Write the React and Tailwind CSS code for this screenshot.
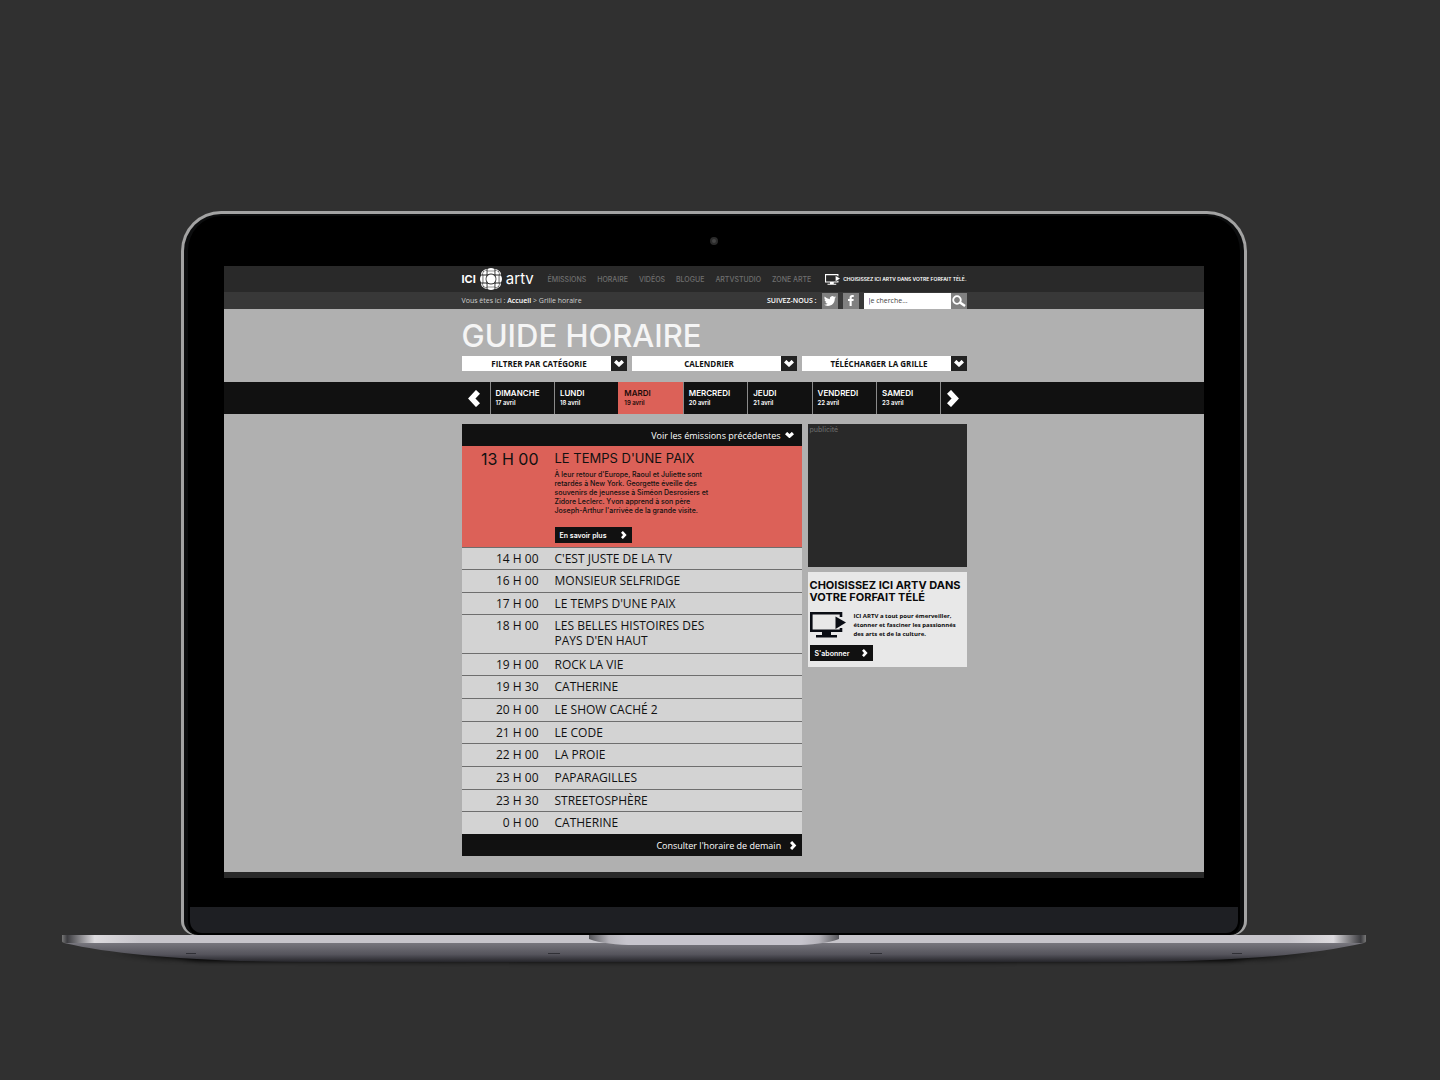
const NAV = ['ÉMISSIONS', 'HORAIRE', 'VIDÉOS', 'BLOGUE', 'ARTVSTUDIO', 'ZONE ARTE'];

const DAYS = [
  ['DIMANCHE', '17 avril'],
  ['LUNDI', '18 avril'],
  ['MARDI', '19 avril'],
  ['MERCREDI', '20 avril'],
  ['JEUDI', '21 avril'],
  ['VENDREDI', '22 avril'],
  ['SAMEDI', '23 avril'],
];

const SHOWS = [
  ['14 H 00', "C'EST JUSTE DE LA TV"],
  ['16 H 00', 'MONSIEUR SELFRIDGE'],
  ['17 H 00', "LE TEMPS D'UNE PAIX"],
  ['18 H 00', "LES BELLES HISTOIRES DES PAYS D'EN HAUT"],
  ['19 H 00', 'ROCK LA VIE'],
  ['19 H 30', 'CATHERINE'],
  ['20 H 00', 'LE SHOW CACHÉ 2'],
  ['21 H 00', 'LE CODE'],
  ['22 H 00', 'LA PROIE'],
  ['23 H 00', 'PAPARAGILLES'],
  ['23 H 30', 'STREETOSPHÈRE'],
  ['0 H 00', 'CATHERINE'],
];

function Chevron({ className }) {
  return (
    <svg viewBox="0 0 12 17" className={className} fill="none" stroke="currentColor" strokeWidth="5.500" aria-hidden="true">
      <path d="M2 1.8 8.2 8.500 2 15.2" />
    </svg>
  );
}

function ChevronDown({ className }) {
  return (
    <svg viewBox="0 0 17 12" className={className} fill="none" stroke="currentColor" strokeWidth="6" aria-hidden="true">
      <path d="M2 2 8.500 8 15 2" />
    </svg>
  );
}

function Screen({ className }) {
  return (
    <svg viewBox="0 0 36 26" className={className} fill="none" aria-hidden="true">
      <path d="M31 5V1.3H1.3V18.8H31V16" stroke="currentColor" strokeWidth="2.6" />
      <path d="M25.500 4.500 36 10.500 25.500 17z" fill="currentColor" />
      <path d="M12 19h9v4h6v2.500H6V23h6z" fill="currentColor" />
    </svg>
  );
}

function Gem({ className }) {
  const quarters = [0, 90, 180, 270];
  return (
    <svg viewBox="-50 -50 100 100" className={className} fill="currentColor" aria-hidden="true">
      <circle r="21" />
      {quarters.map((a) => (
        <g key={a} transform={`rotate(${a})`}>
          <path d="M-16 -38V-45Q0 -55 16 -45V-38z" />
          <path d="M-16 -35H16V-20Q0 -29 -16 -20z" />
          <path d="M20 -36H27Q36 -34 36 -27V-20H22Q22 -22 20 -22z" />
          <path d="M20 -46Q32 -44 36 -38L35 -35Q30 -39 20 -39z" />
          <path d="M46 -20Q44 -32 38 -36L35 -35Q39 -30 39 -20z" />
        </g>
      ))}
    </svg>
  );
}

function Header() {
  return (
    <header className="text-white">
      <div className="bg-[#292929]">
        <div className="mx-auto flex h-[26px] w-full max-w-[505px] items-center justify-between">
          <a href="#accueil" aria-label="ICI ARTV" className="flex items-center gap-1">
            <span className="text-[11px] font-bold">ICI</span>
            <Gem className="size-[22px]" />
            <span className="text-[15px] leading-5">artv</span>
          </a>
          <nav className="flex gap-[11px] text-[7px] font-medium text-[#6f6f6f]">
            {NAV.map((n) => (
              <a key={n} href="#nav">{n}</a>
            ))}
          </nav>
          <a href="#forfait" className="flex items-center gap-[3px] text-[5px] font-semibold">
            <Screen className="h-[11px] w-[15px]" />
            CHOISISSEZ ICI ARTV DANS VOTRE FORFAIT TÉLÉ.
          </a>
        </div>
      </div>
      <div className="bg-[#383838] font-['Open_Sans',sans-serif]">
        <div className="mx-auto flex h-[17px] w-full max-w-[505px] items-center justify-between">
          <p className="text-[7px] leading-[9px] text-[#d0d0d0]">
            Vous êtes ici : <a href="#accueil" className="font-semibold text-white">Accueil</a> &gt; Grille horaire
          </p>
          <div className="flex items-end gap-[5px]">
            <span className="text-[7px] font-semibold leading-4">SUIVEZ-NOUS :</span>
            <a href="#twitter" aria-label="Twitter" className="flex size-4 items-center justify-center bg-[#808080]">
              <svg viewBox="0 0 24 24" className="size-3" fill="currentColor" aria-hidden="true">
                <path d="M23.95 4.57a10 10 0 0 1-2.82.77 4.96 4.96 0 0 0 2.16-2.72c-.95.55-2 .95-3.13 1.18a4.92 4.92 0 0 0-8.38 4.48C7.69 8.1 4.07 6.13 1.64 3.16a4.92 4.92 0 0 0 1.52 6.57 4.9 4.9 0 0 1-2.23-.61v.06a4.92 4.92 0 0 0 3.95 4.83 5 5 0 0 1-2.21.08 4.94 4.94 0 0 0 4.6 3.42A9.87 9.87 0 0 1 0 19.54a13.99 13.99 0 0 0 7.55 2.21c9.05 0 14-7.5 14-13.98 0-.21 0-.42-.02-.63a9.94 9.94 0 0 0 2.42-2.57z" />
              </svg>
            </a>
            <a href="#facebook" aria-label="Facebook" className="flex size-4 items-center justify-center bg-[#808080]">
              <svg viewBox="0 0 12 22" className="h-[11px] w-[6px]" fill="currentColor" aria-hidden="true">
                <path d="M3.2 22V12H0V8h3.2V5.300C3.200 2 5.200 0 8.300 0c1.500 0 2.800.1 3.200.2v3.700H9.400C7.700 3.900 7.400 4.700 7.400 5.800V8h4l-.5 4H7.400v10z" />
              </svg>
            </a>
            <form className="flex" onSubmit={(e) => e.preventDefault()}>
              <input type="search" aria-label="Je cherche" placeholder="Je cherche..." className="h-4 w-[87px] bg-white px-[5px] text-[7px] text-[#444] placeholder:text-[#444]" />
              <button type="submit" aria-label="Rechercher" className="flex size-4 items-center justify-center bg-[#808080]">
                <svg viewBox="0 0 14 12" className="h-3 w-[14px]" fill="none" stroke="currentColor" aria-hidden="true">
                  <circle cx="5" cy="5" r="3.800" strokeWidth="1.800" />
                  <path d="M8 7.500 13 11" strokeWidth="2.400" />
                </svg>
              </button>
            </form>
          </div>
        </div>
      </div>
    </header>
  );
}

function Filters() {
  const box = 'relative flex h-[15px] flex-1 bg-white';
  const field = "w-full appearance-none pr-[10px] text-center font-['Open_Sans',sans-serif] text-[8px] leading-[15px] font-bold text-[#111] [text-align-last:center]";
  const icon = 'pointer-events-none absolute right-0 top-0 flex h-[15px] w-4 items-center justify-center bg-[#222] text-white';
  return (
    <div className="mt-[3px] flex gap-[5px]">
      <div className={box}>
        <select aria-label="Filtrer par catégorie" className={field}>
          <option>FILTRER PAR CATÉGORIE</option>
        </select>
        <span className={icon}><ChevronDown className="w-[10px]" /></span>
      </div>
      <div className={box}>
        <select aria-label="Calendrier" className={field}>
          <option>CALENDRIER</option>
        </select>
        <span className={icon}><ChevronDown className="w-[10px]" /></span>
      </div>
      <div className={box}>
        <button type="button" className={field}>TÉLÉCHARGER LA GRILLE</button>
        <span className={icon}><ChevronDown className="w-[10px]" /></span>
      </div>
    </div>
  );
}

function Week() {
  return (
    <nav aria-label="Jours" className="mt-[11px] bg-[#111] text-white">
      <div className="mx-auto flex h-8 w-full max-w-[505px]">
        <button type="button" aria-label="Semaine précédente" className="flex w-7 items-center pl-[6px]">
          <Chevron className="h-[17px] w-3 rotate-180" />
        </button>
        {DAYS.map(([day, date]) => (
          <a
            key={day}
            href="#jour"
            className={
              day === 'MARDI'
                ? 'flex-1 border-l border-[#dc6158] bg-[#dc6158] pt-[6px] pl-[5px] text-[#1c0b0a]'
                : 'flex-1 border-l border-[#8a8a8a] pt-[6px] pl-[5px]'
            }
          >
            <span className="block text-[8px] leading-[10px] font-semibold">{day}</span>
            <span className="block text-[6px] leading-[10px] font-semibold">{date}</span>
          </a>
        ))}
        <button type="button" aria-label="Semaine suivante" className="flex w-[26px] items-center border-l border-[#8a8a8a] pl-[6px]">
          <Chevron className="h-[17px] w-3" />
        </button>
      </div>
    </nav>
  );
}

function Schedule() {
  return (
    <section className="min-w-0 flex-[340]">
      <button type="button" className="flex h-[22px] w-full items-center justify-end gap-1 bg-[#111] pr-2 font-['Open_Sans',sans-serif] text-[9px] font-medium text-white">
        Voir les émissions précédentes
        <ChevronDown className="w-[9px]" />
      </button>
      <table aria-label="Horaire du mardi 19 avril" className="h-[388px] w-full table-fixed border-collapse text-[#111]">
        <colgroup>
          <col className="w-[93px]" />
          <col />
        </colgroup>
        <tbody>
          <tr className="h-[101px] bg-[#dc6158] align-top">
            <th scope="row" className="pt-1 pr-4 text-right text-[16px] leading-[19px] font-normal">13 H 00</th>
            <td className="pt-[3px]">
              <h2 className="text-[13px] leading-[18px]">LE TEMPS D'UNE PAIX</h2>
              <p className="mt-[3px] max-w-[162px] text-[7px] leading-[9px] font-medium">
                À leur retour d'Europe, Raoul et Juliette sont retardés à New York. Georgette éveille des souvenirs de jeunesse à Siméon Desrosiers et Zidore Leclerc. Yvon apprend à son père Joseph-Arthur l'arrivée de la grande visite.
              </p>
              <button type="button" className="mt-3 flex h-4 w-[77px] items-center justify-between bg-[#111] px-[5px] text-[7px] font-semibold text-white">
                En savoir plus
                <Chevron className="h-2" />
              </button>
            </td>
          </tr>
          {SHOWS.map(([time, title]) => (
            <tr key={time} className="border-t border-[#6e6e6e] bg-[#d3d3d3] align-top font-['Open_Sans',sans-serif]">
              <th scope="row" className="pt-[3px] pr-4 pb-[3px] text-right text-[12px] leading-[15px] font-medium">{time}</th>
              <td className="pt-[3px] pr-[80px] pb-[3px] text-[12px] leading-[15px] font-medium">{title}</td>
            </tr>
          ))}
        </tbody>
      </table>
      <a href="#demain" className="flex h-[22px] items-center justify-end gap-[9px] bg-[#111] pr-[5px] font-['Open_Sans',sans-serif] text-[9px] font-medium text-white">
        Consulter l'horaire de demain
        <Chevron className="h-[9px]" />
      </a>
    </section>
  );
}

function Sidebar() {
  return (
    <aside className="flex min-w-0 flex-[159] flex-col gap-[5px]">
      <div className="h-[143px] bg-[#292929] px-[2px] pt-[1px] text-[7px] leading-[10px] font-medium text-[#666]">publicité</div>
      <section className="bg-[#e8e8e8] px-[2px] pt-[7px] pb-[6px] text-[#0a0a0a]">
        <h2 className="text-[11px] leading-3 font-bold">CHOISISSEZ ICI ARTV DANS VOTRE FORFAIT TÉLÉ</h2>
        <div className="mt-[9px] flex gap-2">
          <Screen className="h-[26px] w-9 shrink-0 text-[#0a0d14]" />
          <p className="font-['Open_Sans',sans-serif] text-[6px] leading-[9px] font-bold">
            ICI ARTV a tout pour émerveiller,<br />
            étonner et fasciner les passionnés<br />
            des arts et de la culture.
          </p>
        </div>
        <button type="button" className="mt-[6px] flex h-4 w-[63px] items-center justify-between bg-[#111] px-[5px] text-[7px] font-semibold text-white">
          S'abonner
          <Chevron className="h-2" />
        </button>
      </section>
    </aside>
  );
}

function Laptop({ children }) {
  return (
    <div className="flex flex-col items-center">
      <div className="w-full max-w-[1066px] rounded-t-[40px] rounded-b-[14px] bg-[#a3a3a3] px-[3px] pt-[3px]">
        <div className="rounded-t-[37px] rounded-b-[14px] border-x-4 border-t-2 border-[#0c0d0e] bg-black pb-[2px]">
          <div className="flex h-[50px] items-center justify-center">
            <span className="size-2 rounded-full border-2 border-[#2b2b2b] bg-[#444]" />
          </div>
          <div className="mx-9">{children}</div>
          <div className="mx-[2px] mt-[29px] h-[26px] rounded-b-[12px] bg-[#1e1f23]" />
        </div>
      </div>
      <svg viewBox="0 0 1304 34" className="w-full max-w-[1304px]" aria-hidden="true">
        <defs>
          <linearGradient id="edge">
            <stop offset="0" stopColor="#777" />
            <stop offset="0.004" stopColor="#3c3c40" />
            <stop offset="0.025" stopColor="#dcdade" />
            <stop offset="0.06" stopColor="#c6c4ca" />
            <stop offset="0.94" stopColor="#c6c4ca" />
            <stop offset="0.975" stopColor="#dcdade" />
            <stop offset="0.996" stopColor="#3c3c40" />
            <stop offset="1" stopColor="#777" />
          </linearGradient>
          <linearGradient id="belly" x2="0" y2="1">
            <stop offset="0" stopColor="#77767d" />
            <stop offset="0.6" stopColor="#55545c" />
            <stop offset="1" stopColor="#25252a" />
          </linearGradient>
          <linearGradient id="notch">
            <stop offset="0" stopColor="#55555a" />
            <stop offset="0.08" stopColor="#b5b3ba" />
            <stop offset="0.15" stopColor="#c6c4cc" />
            <stop offset="0.85" stopColor="#c6c4cc" />
            <stop offset="0.92" stopColor="#b5b3ba" />
            <stop offset="1" stopColor="#55555a" />
          </linearGradient>
          <filter id="soft" x="-10%" y="-100%" width="120%" height="300%">
            <feGaussianBlur stdDeviation="8 2" />
          </filter>
        </defs>
        <path d="M40 18L100 25Q250 27 652 27T1204 25L1264 18 1180 26Q1000 28 652 28T124 26z" fill="#000" filter="url(#soft)" />
        <path d="M60 16H1244L1170 26H134z" fill="#000" filter="url(#soft)" />
        <path d="M2 8Q80 26 240 27H1064Q1224 26 1302 8z" fill="url(#belly)" />
        <path d="M0 0H1304V6Q1304 8 1300 8H4Q0 8 0 6z" fill="url(#edge)" />
        <path d="M527 0H777V4Q760 10 730 10H574Q544 10 527 4z" fill="url(#notch)" />
        <path d="M124 18.500h10M486 18.500h12M808 18.500h12M1170 18.500h10" stroke="#303036" />
      </svg>
    </div>
  );
}

export default function App() {
  return (
    <main className="min-h-screen bg-[#303030] pt-[211px] pr-3 font-['Inter',sans-serif]">
      <Laptop>
        <div className="bg-[#b0b0b0] leading-none">
          <Header />
          <div className="mx-auto w-full max-w-[505px] pt-[10px]">
            <h1 className="text-[31px] leading-[34px] font-medium text-[#f5f5f5]">GUIDE HORAIRE</h1>
            <Filters />
          </div>
          <Week />
          <div className="mx-auto flex w-full max-w-[505px] gap-[6px] py-[10px] pb-4">
            <Schedule />
            <Sidebar />
          </div>
          <footer className="h-[6px] bg-[#292929]" />
        </div>
      </Laptop>
    </main>
  );
}
